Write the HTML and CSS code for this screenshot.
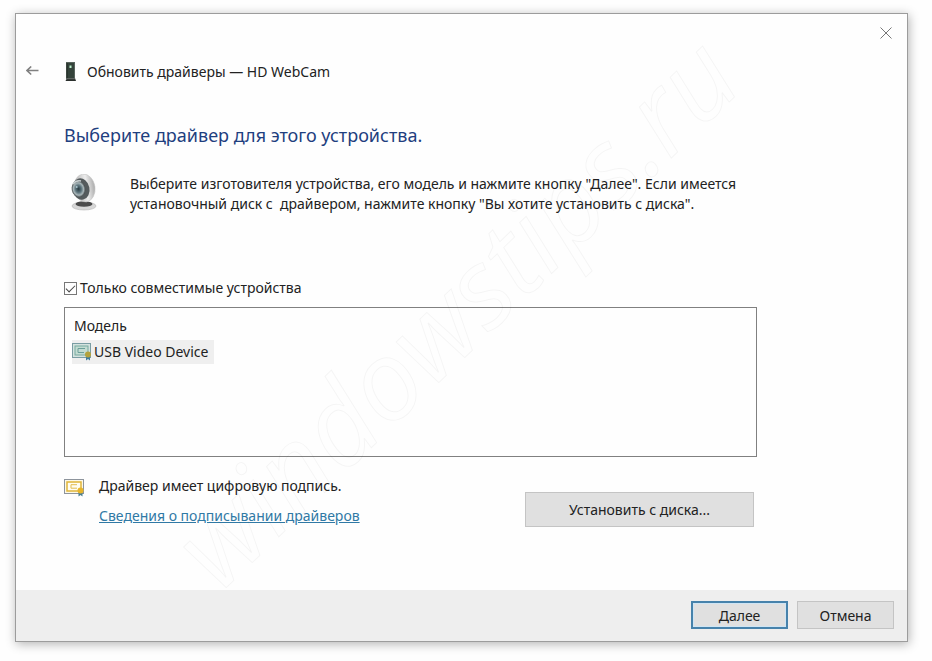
FILE: index.html
```html
<!DOCTYPE html>
<html lang="ru">
<head>
    <meta charset="UTF-8">
    <meta name="viewport" content="width=device-width, initial-scale=1.0">
    <title>Обновить драйверы — HD WebCam</title>
    <link rel="stylesheet" href="styles.css">
</head>
<body>

    <div class="window">

        <div class="title-bar">
            <button type="button" class="close-btn" aria-label="Закрыть">
                <svg width="12" height="12" viewBox="0 0 12 12"><path d="M0.5 0.5L11.5 11.5M11.5 0.5L0.5 11.5" fill="none" stroke="#777" stroke-width="1"/></svg>
            </button>
        </div>

        <header class="header">
            <button type="button" class="back-btn" aria-label="Назад">
                <svg width="13" height="12" viewBox="0 0 13 12"><path d="M12.5 4.5H1.2M5.2 0.5L1 4.5L5.2 8.5" fill="none" stroke="#808080" stroke-width="1.6"/></svg>
            </button>
            <svg class="device-icon" width="12" height="20" viewBox="0 0 12 20">
                <rect x="1.5" y="0.5" width="8" height="16" fill="#34433b" stroke="#58645d"/>
                <path d="M2 1V16" stroke="#1f2823"/>
                <rect x="4.5" y="3.5" width="2" height="2.5" fill="#b9f0cc"/>
                <path d="M2 16H10L11 19H0.5Z" fill="#2a2f2c"/>
                <path d="M1.5 16.7H10" stroke="#8b928e" stroke-width="0.7"/>
            </svg>
            <span class="window-name">Обновить драйверы — HD WebCam</span>
        </header>

        <main class="content">
            <h1>Выберите драйвер для этого устройства.</h1>

            <div class="intro">
                <svg class="webcam-icon" width="28" height="40" viewBox="0 0 28 40">
                    <defs>
                        <linearGradient id="shell" x1="0" y1="0" x2="1" y2="0">
                            <stop offset="0" stop-color="#a6a6a6"/>
                            <stop offset="0.6" stop-color="#ededed"/>
                            <stop offset="1" stop-color="#aaa"/>
                        </linearGradient>
                        <radialGradient id="lens">
                            <stop offset="0" stop-color="#273940"/>
                            <stop offset="0.45" stop-color="#60777f"/>
                            <stop offset="0.75" stop-color="#a9b6b9"/>
                            <stop offset="1" stop-color="#454b4d"/>
                        </radialGradient>
                    </defs>
                    <ellipse cx="14" cy="32" rx="12" ry="4" fill="#d7d7d7" stroke="#b5b5b5" stroke-width="0.6"/>
                    <ellipse cx="14" cy="30" rx="8.5" ry="2.8" fill="#4b4b4b"/>
                    <ellipse cx="14.5" cy="14" rx="10.5" ry="14" transform="rotate(-8 14.5 14)" fill="url(#shell)" stroke="#c6c6c6" stroke-width="0.6"/>
                    <ellipse cx="11" cy="15" rx="8.5" ry="10.8" transform="rotate(-12 11 15)" fill="#555b5d"/>
                    <ellipse cx="8.5" cy="15" rx="6.8" ry="8.3" transform="rotate(-10 8.5 15)" fill="url(#lens)"/>
                    <path d="M3 10Q6 6 11 7" fill="none" stroke="#c9d0d1" stroke-width="1.4"/>
                    <circle cx="6.7" cy="13" r="1" fill="#a9c3cc"/>
                </svg>
                <p>Выберите изготовителя устройства, его модель и нажмите кнопку "Далее". Если имеется установочный диск с&nbsp; драйвером, нажмите кнопку "Вы хотите установить с диска".</p>
            </div>

            <div class="compatible">
                <input type="checkbox" id="compatible" checked>
                <label for="compatible">Только совместимые устройства</label>
            </div>

            <div class="model-list">
                <table>
                    <thead>
                        <tr><th>Модель</th></tr>
                    </thead>
                    <tbody>
                        <tr>
                            <td>
                                <div class="model">
                                    <svg width="21" height="18" viewBox="0 0 21 18">
                                        <rect x="0.5" y="0.5" width="18" height="14" fill="#d5e3df" stroke="#7a9da3"/>
                                        <rect x="3" y="3" width="13" height="9" fill="#c3dcd2" stroke="#77aaa0"/>
                                        <path d="M13 5.5H6V9.5H12" fill="none" stroke="#6b9f99"/>
                                        <path d="M14 12H18V17.5L16 16L14 17.5Z" fill="#3f7d9d"/>
                                        <circle cx="16" cy="11.5" r="3" fill="#b3a23c"/>
                                    </svg>
                                    <span>USB Video Device</span>
                                </div>
                            </td>
                        </tr>
                    </tbody>
                </table>
            </div>

            <div class="signature">
                <svg class="signed-icon" width="21" height="18" viewBox="0 0 21 18">
                    <rect x="0.5" y="0.5" width="19" height="14" fill="#fdf8e6" stroke="#8d949c"/>
                    <rect x="3" y="3" width="14" height="9" fill="#fffdf2" stroke="#e0b53a" stroke-width="1.5"/>
                    <path d="M13 5.7H7V9.2H13" fill="none" stroke="#e3bd51"/>
                    <path d="M14.5 12H18.5V17.5L16.5 16L14.5 17.5Z" fill="#4a7f90"/>
                    <circle cx="16.5" cy="11.5" r="3" fill="#e8b52a"/>
                </svg>
                <div class="signature-text">
                    <p>Драйвер имеет цифровую подпись.</p>
                    <a href="#">Сведения о подписывании драйверов</a>
                </div>
                <button type="button" class="btn disk-btn">Установить с диска...</button>
            </div>
        </main>

        <footer class="footer">
            <button type="button" class="btn next-btn">Далее</button>
            <button type="button" class="btn">Отмена</button>
        </footer>

        <div class="watermark" aria-hidden="true">windowstips.ru</div>
    </div>

</body>
</html>
```
FILE: styles.css
```css
*,
*::before,
*::after {
    box-sizing: border-box;
}

body {
    margin: 0;
    padding: 13px 24px 19px 15px;
    min-height: 100vh;
    display: flex;
    background-color: #fefefe;
    font-family: "Noto Sans", "Open Sans", sans-serif;
    font-size: 14px;
    line-height: 20px;
    color: #222;
}

h1,
p {
    margin: 0;
    font-weight: 400;
}

button {
    font: inherit;
    color: inherit;
}

.window {
    position: relative;
    flex: 1;
    display: flex;
    flex-direction: column;
    background-color: #fefefe;
    border: 1px solid #9c9c9c;
    box-shadow: 1px 2px 10px rgba(0, 0, 0, 0.3);
}

.title-bar {
    display: flex;
    justify-content: flex-end;
    padding: 9px 11px 0 0;
}

.close-btn,
.back-btn {
    display: flex;
    padding: 4px;
    border: none;
    background: none;
}

/* Header */
.header {
    display: flex;
    align-items: center;
    padding: 19px 6px 0;
}

.device-icon {
    margin: 0 10px 0 22px;
}

/* Content */
.content {
    flex: 1;
    padding: 39px 150px 24px 48px;
}

h1 {
    font-size: 18px;
    line-height: 28px;
    color: #1f3f7f;
}

.intro {
    display: flex;
    gap: 32px;
    padding: 25px 0 0 6px;
}

.webcam-icon {
    flex-shrink: 0;
}

.intro p {
    flex: 1;
    max-width: 620px;
}

.compatible {
    display: flex;
    align-items: center;
    gap: 3px;
    margin: 64px 0 9px;
}

.compatible input {
    appearance: none;
    width: 13px;
    height: 13px;
    margin: 0;
    border: 1px solid #777;
    display: grid;
    place-items: center;
}

.compatible input:checked::before {
    content: "";
    width: 9px;
    height: 5px;
    border: solid #444;
    border-width: 0 0 1px 1px;
    transform: translateY(-1px) rotate(-45deg);
}

.model-list {
    height: 150px;
    padding: 8px 7px;
    border: 1px solid #808080;
}

.model-list table {
    border-collapse: collapse;
}

.model-list th {
    padding: 0 2px 4px;
    font-weight: 400;
    text-align: left;
}

.model-list td {
    padding: 0;
}

.model {
    display: flex;
    align-items: center;
    gap: 1px;
    height: 24px;
    padding-right: 6px;
    background-color: #efefef;
}

.signature {
    display: flex;
    padding: 19px 3px 0 0;
}

.signed-icon {
    margin: 3px 14px 0 0;
}

.signature-text {
    flex: 1;
    display: flex;
    flex-direction: column;
    align-items: flex-start;
    gap: 10px;
}

.signature a {
    color: #3079a5;
}

/* Buttons */
.btn {
    width: 97px;
    height: 28px;
    padding: 1px 0 0;
    border: 1px solid #c4c4c4;
    background-color: #e0e0e0;
}

.disk-btn {
    width: 229px;
    height: 35px;
    margin-top: 16px;
}

.next-btn {
    border: 2px solid #4782ab;
    box-shadow: inset 0 0 0 1px #cfe5f4;
}

.footer {
    display: flex;
    justify-content: flex-end;
    gap: 9px;
    padding: 11px 13px 12px;
    background-color: #eee;
}

.watermark {
    position: absolute;
    top: 47%;
    left: 49%;
    width: max-content;
    transform: translate(-50%, -50%) rotate(-44deg);
    font-family: "Open Sans", sans-serif;
    font-size: 110px;
    font-style: italic;
    line-height: 1;
    white-space: nowrap;
    color: transparent;
    -webkit-text-stroke: 1px rgba(0, 0, 0, 0.04);
    pointer-events: none;
}
```
